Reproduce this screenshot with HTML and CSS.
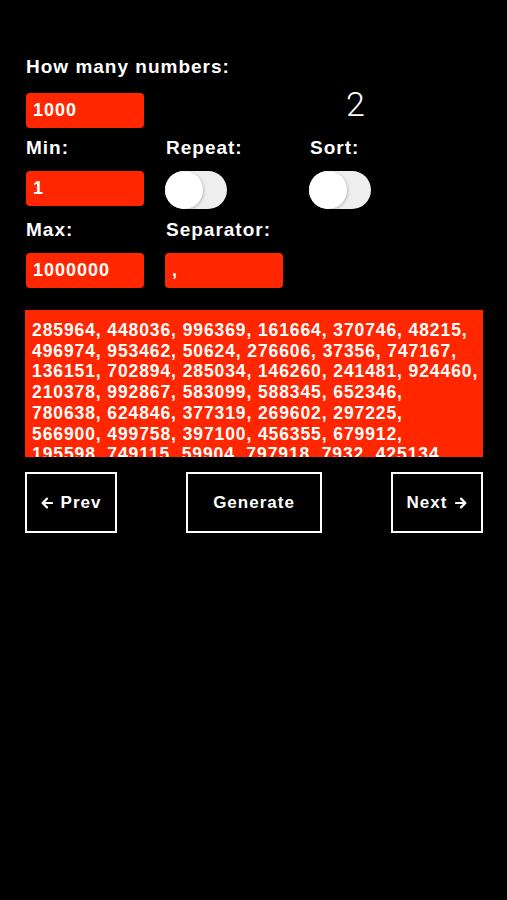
FILE: index.html
```html
<!DOCTYPE html>
<html lang="en">
<head>
<meta charset="utf-8">
<title>Random Numbers</title>
<link rel="stylesheet" href="styles.css">
</head>
<body>
<main class="page">
  <div class="label">How many numbers:</div>
  <div class="row row-first">
    <div class="input">1000</div>
    <div class="spacer"></div>
    <div class="count">2</div>
  </div>

  <div class="row row-second">
    <div class="field">
      <div class="label">Min:</div>
      <div class="input">1</div>
    </div>
    <div class="field">
      <div class="label">Repeat:</div>
      <div class="toggle"><span class="knob"></span></div>
    </div>
    <div class="field">
      <div class="label">Sort:</div>
      <div class="toggle"><span class="knob"></span></div>
    </div>
  </div>

  <div class="row row-third">
    <div class="field">
      <div class="label">Max:</div>
      <div class="input">1000000</div>
    </div>
    <div class="field">
      <div class="label">Separator:</div>
      <div class="input">,</div>
    </div>
  </div>

  <div class="output">285964, 448036, 996369, 161664, 370746, 48215,<br>496974, 953462, 50624, 276606, 37356, 747167,<br>136151, 702894, 285034, 146260, 241481, 924460,<br>210378, 992867, 583099, 588345, 652346,<br>780638, 624846, 377319, 269602, 297225,<br>566900, 499758, 397100, 456355, 679912,<br>195598, 749115, 59904, 797918, 7932, 425134,<br>318842, 602717, 84021, 530196, 661270,</div>

  <div class="actions">
    <button class="btn btn-side" type="button"><svg class="arrow" viewBox="0 0 12 12" width="12" height="12"><path d="M11 6H1.8M6 1.6L1.6 6L6 10.4" fill="none" stroke="#fff" stroke-width="2.2" stroke-linecap="round" stroke-linejoin="round"/></svg>Prev</button>
    <button class="btn btn-main" type="button">Generate</button>
    <button class="btn btn-side" type="button">Next<svg class="arrow arrow-right" viewBox="0 0 12 12" width="12" height="12"><path d="M1 6H10.2M6 1.6L10.4 6L6 10.4" fill="none" stroke="#fff" stroke-width="2.2" stroke-linecap="round" stroke-linejoin="round"/></svg></button>
  </div>
</main>
</body>
</html>
```
FILE: styles.css
```css
html, body {
  margin: 0;
  padding: 0;
  background: #000;
}

body {
  width: 507px;
  min-height: 900px;
  font-family: "Liberation Sans", Arial, sans-serif;
  color: #fff;
}

.page {
  padding: 56px 24px 0 25px;
}

.label {
  font-size: 19px;
  font-weight: bold;
  line-height: 22px;
  letter-spacing: 1px;
  padding-left: 1px;
  white-space: nowrap;
}

.row {
  display: grid;
  grid-template-columns: 140px 144px 1fr;
}

.row-first {
  margin-top: 15px;
}

.row-second {
  margin-top: 9px;
}

.row-third {
  margin-top: 10px;
}

.field {
  display: flex;
  flex-direction: column;
  gap: 12px;
}

.input {
  box-sizing: border-box;
  width: 118px;
  height: 35px;
  margin-left: 1px;
  padding-left: 7px;
  background: #ff2600;
  border-radius: 4px;
  font-size: 18px;
  font-weight: bold;
  line-height: 35px;
  letter-spacing: 1px;
  color: #fff;
}

.row-third .field:nth-child(2) .input {
  margin-left: 0;
}

.count {
  margin-top: -6px;
  padding-left: 37px;
  font-family: Roboto, "Liberation Sans", sans-serif;
  font-weight: 300;
  font-size: 34px;
  line-height: 34px;
}

.toggle {
  width: 62px;
  height: 38px;
  border-radius: 19px;
  background: #eeeeee;
  display: flex;
  align-items: center;
}

.knob {
  width: 38px;
  height: 38px;
  border-radius: 50%;
  background: #fff;
  box-shadow: 1px 1px 3px rgba(0, 0, 0, 0.22);
}

.output {
  margin-top: 22px;
  height: 147px;
  box-sizing: border-box;
  padding: 10px 6px 0 7px;
  background: #ff2600;
  overflow: hidden;
  white-space: nowrap;
  font-size: 17.5px;
  font-weight: bold;
  line-height: 20.7px;
  letter-spacing: 0.9px;
  color: #fff;
}

.actions {
  margin-top: 15px;
  display: flex;
  justify-content: space-between;
}

.btn {
  box-sizing: border-box;
  height: 61px;
  border: 2px solid #fff;
  background: #000;
  color: #fff;
  font-family: "Liberation Sans", Arial, sans-serif;
  font-size: 17px;
  font-weight: bold;
  letter-spacing: 1px;
  padding: 0;
  display: flex;
  align-items: center;
  justify-content: center;
  gap: 8px;
}

.btn-side {
  width: 92px;
}

.btn-main {
  width: 136px;
}

.arrow {
  display: block;
  flex: none;
}
```
